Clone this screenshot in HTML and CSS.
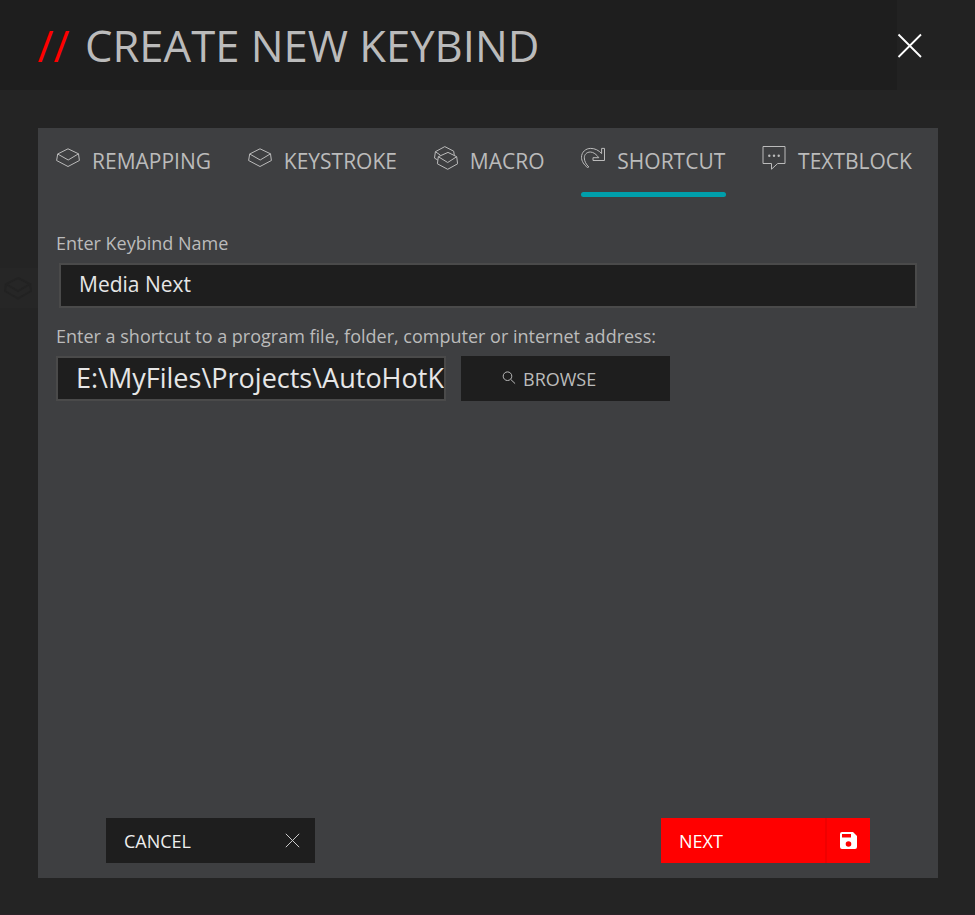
FILE: index.html
```html
<!DOCTYPE html>
<html lang="en">
<head>
<meta charset="utf-8">
<title>Create New Keybind</title>
<link rel="stylesheet" href="styles.css">
</head>
<body>
<div class="dialog">
  <div class="backdrop-key">
    <svg width="28" height="24" viewBox="0 0 28 24"><path d="M14 2 26 8 14 15 2 8ZM2 8 1 15 14 22.5 27 15 26 8"/></svg>
  </div>
  <header class="header">
    <span class="slashes">//</span>
    <h1 class="title">CREATE NEW KEYBIND</h1>
    <button class="close" aria-label="Close">
      <svg width="26" height="26" viewBox="0 0 26 26"><path d="M1.5 1.5 24 24M24 1.5 1.5 24"/></svg>
    </button>
  </header>
  <main class="panel">
    <nav class="tabs">
      <a class="tab remapping">
        <svg class="icon" width="24" height="24" viewBox="0 0 24 24"><path d="M12 2.8 22.5 7.8 12.2 14 1.7 8ZM1.7 8 .6 14.5 12 20.5 23.4 14.5 22.5 7.8"/></svg>
        <span>REMAPPING</span>
      </a>
      <a class="tab keystroke">
        <svg class="icon" width="24" height="24" viewBox="0 0 24 24"><path d="M12 2.8 22.5 7.8 12.2 14 1.7 8ZM1.7 8 .6 14.5 12 20.5 23.4 14.5 22.5 7.8"/></svg>
        <span>KEYSTROKE</span>
      </a>
      <a class="tab macro">
        <svg class="icon" width="24" height="24" viewBox="0 0 24 24"><path d="M14 6.4 22.7 10.7 13.7 16.5 4.3 10.7ZM4.3 10.7 3.4 17.8 13.7 23.3 23.6 17.8 22.7 10.7M3.7 14 .5 12.1 1.4 5.7 10.8.6 19.7 5.2 20.3 9.3M1.4 5.7 6.3 9.1"/></svg>
        <span>MACRO</span>
      </a>
      <a class="tab shortcut active">
        <svg class="icon" width="24" height="24" viewBox="0 0 24 24"><path d="M7.8 21 6.5 21.5C3 18.8.5 15.2.5 11.3.5 6 4.8 2.4 9.7 2.4 13.9 2.4 17.8 4.3 20.6 7.6V2.4H23.5V14.5H12V11.7H17.8C15.5 8.5 12.5 6 9.3 6 5.7 6 3.3 8.6 3.3 11.8 3.3 15.1 5.2 18.5 7.8 21Z"/></svg>
        <span>SHORTCUT</span>
      </a>
      <a class="tab textblock">
        <svg class="icon" width="24" height="24" viewBox="0 0 24 24"><path d="M1 .5H23V17.5H15.7L9.5 23.2V17.5H1Z"/><g class="dots"><circle cx="7.3" cy="9.7" r="1.2"/><circle cx="12" cy="9.7" r="1.2"/><circle cx="16.7" cy="9.7" r="1.2"/></g></svg>
        <span>TEXTBLOCK</span>
      </a>
    </nav>
    <section class="form">
      <label class="label">Enter Keybind Name</label>
      <div class="field name">Media Next</div>
      <label class="label second">Enter a shortcut to a program file, folder, computer or internet address:</label>
      <div class="row">
        <div class="field path">E:\MyFiles\Projects\AutoHotK</div>
        <button class="browse">
          <svg width="14" height="14" viewBox="0 0 14 14"><circle cx="5.5" cy="5.2" r="4.3"/><path d="m8.7 8.4 4.4 4.2"/></svg>
          <span>BROWSE</span>
        </button>
      </div>
    </section>
    <footer class="actions">
      <button class="action cancel"><span>CANCEL</span>
        <svg width="15" height="15" viewBox="0 0 15 15"><path d="m.8.8 13.4 13.4M14.2.8.8 14.2"/></svg>
      </button>
      <button class="action next"><span>NEXT</span>
        <span class="save"><svg width="17" height="17" viewBox="0 0 17 17"><path fill-rule="evenodd" d="M2 0H13L17 4V15a2 2 0 0 1-2 2H2a2 2 0 0 1-2-2V2A2 2 0 0 1 2 0ZM2 2V5.5H11V2ZM8.5 9.2A2.8 2.8 0 1 0 8.5 14.8 2.8 2.8 0 1 0 8.5 9.2Z"/></svg></span>
      </button>
    </footer>
  </main>
</div>
</body>
</html>
```
FILE: styles.css
```css
* { box-sizing: border-box; }
body {
  margin: 0;
  background: #242424;
  color: #bbb;
  font-family: "Open Sans", "Noto Sans", sans-serif;
  overflow: hidden;
}
button { border: 0; padding: 0; margin: 0; font: inherit; color: inherit; border-radius: 0; }
svg { display: block; fill: none; flex: none; }
.dialog { position: relative; height: 915px; border-bottom: 1px solid #2b2228; }
/* dimmed key showing through the overlay, left of the panel */
.backdrop-key {
  position: absolute;
  left: 0;
  top: 268px;
  width: 38px;
  height: 40px;
  padding: 8px 0 0 4px;
  background: #262626;
}
.backdrop-key svg { stroke: #222; stroke-width: 2; }
.header {
  display: flex;
  align-items: center;
  height: 90px;
  padding-left: 37.5px;
  background: #1e1e1e;
  white-space: nowrap;
}
.slashes, .title { font-size: 43.6px; font-weight: 400; line-height: 60px; margin: 0; }
.slashes { width: 47.5px; color: #f00; }
.close { display: flex; margin-left: auto; width: 78px; height: 90px; padding: 33px 0 0; background: #222; }
.close svg { stroke: #fff; stroke-width: 1.8; }
.panel {
  display: flex;
  flex-direction: column;
  width: 900px;
  height: 750px;
  margin: 38px 0 0 38px;
  background: #3e3f41;
}
.tabs { display: flex; padding: 18px 18px 0; gap: 36.8px; height: 70px; }
.tab {
  display: flex;
  gap: 12px;
  height: 51px;
  font-size: 21px;
  line-height: 30px;
  white-space: nowrap;
}
.icon { stroke: #bbb; stroke-width: 1; }
.dots { fill: #bbb; stroke: none; }
.active { position: relative; }
.active::after {
  content: "";
  position: absolute;
  left: 0;
  right: -.5px;
  bottom: 0;
  height: 5px;
  border-radius: 2.5px;
  background: #009fab;
}
.form { padding: 33px 18px 0; }
.label { display: block; font-size: 18px; line-height: 24px; }
.second { margin-top: 16px; }
.field {
  height: 45px;
  border: 2px solid #4a4a4a;
  background: #1e1e1e;
  color: #e6e6e6;
  padding-left: 18px;
  overflow: hidden;
  white-space: nowrap;
}
.name { width: 858px; margin: 8px 0 0 3px; font-size: 21px; line-height: 39px; }
.row { display: flex; gap: 15px; margin-top: 8px; }
.path { width: 390px; font-size: 27px; line-height: 40px; }
.browse {
  display: flex;
  gap: 7px;
  width: 209px;
  height: 45px;
  padding-left: 41px;
  background: #1e1e1e;
  font-size: 18px;
  line-height: 46px;
}
.browse svg { margin-top: 15px; stroke: #bbb; stroke-width: 1; }
.actions { display: flex; justify-content: space-between; margin-top: auto; padding: 0 68px 15px; }
.action {
  display: flex;
  align-items: center;
  justify-content: space-between;
  width: 209px;
  height: 45px;
  padding-left: 18px;
  font-size: 18px;
  color: #eee;
}
.cancel { padding-right: 15px; background: #1e1e1e; }
.cancel svg { stroke: #ccc; stroke-width: 1; }
.next { background: #f00; color: #fff; }
.save { display: flex; align-items: center; justify-content: center; width: 45px; height: 45px; border-left: 2px solid #f00000; }
.save svg { fill: #fff; }
```
